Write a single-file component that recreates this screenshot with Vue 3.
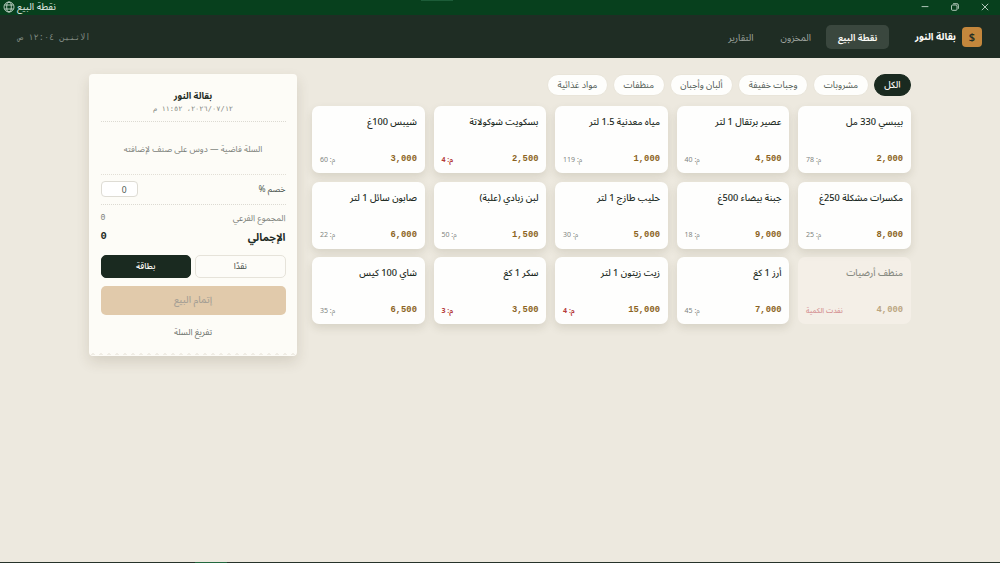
<template>
  <div class="app">
    <div class="titlebar">
      <svg class="globe" viewBox="0 0 12 12">
        <circle cx="6" cy="6" r="5" />
        <ellipse cx="6" cy="6" rx="2.3" ry="5" />
        <path d="M1.7 4h8.6M1.7 8h8.6" />
      </svg>
      <span class="window-title" dir="rtl">نقطة البيع</span>
      <div class="window-controls">
        <svg viewBox="0 0 10 10"><path d="M1.6 4.6h6.8" /></svg>
        <svg viewBox="0 0 10 10">
          <rect x="1.5" y="3" width="5.5" height="5.3" rx="1" />
          <path d="M3.1 1.7h3.8a1.5 1.5 0 0 1 1.5 1.5v3.6" />
        </svg>
        <svg viewBox="0 0 10 10"><path d="M1.8 1.8l6.4 6.4M8.2 1.8L1.8 8.2" /></svg>
      </div>
    </div>

    <header class="header" dir="rtl">
      <div class="brand">
        <span class="logo">$</span>
        <span class="brand-name">{{ shop }}</span>
      </div>
      <nav class="nav">
        <a
          v-for="tab in tabs"
          :key="tab"
          class="nav-item"
          :class="{ active: tab === activeTab }"
          @click="activeTab = tab"
        >{{ tab }}</a>
      </nav>
      <span class="clock">الاثنين ١٢:٠٤ ص</span>
    </header>

    <main class="main" dir="rtl">
      <section class="catalog">
        <div class="chips">
          <button
            v-for="cat in categories"
            :key="cat"
            class="chip"
            :class="{ active: cat === activeCategory }"
            @click="activeCategory = cat"
          >{{ cat }}</button>
        </div>
        <div class="grid">
          <div
            v-for="product in products"
            :key="product.name"
            class="product"
            :class="{ disabled: product.stock === 0 }"
          >
            <div class="product-name">{{ product.name }}</div>
            <div class="product-footer">
              <span class="price">{{ product.price.toLocaleString('en-US') }}</span>
              <span v-if="product.stock === 0" class="stock out">نفدت الكمية</span>
              <span v-else class="stock" :class="{ low: product.stock < 5 }">م: {{ product.stock }}</span>
            </div>
          </div>
        </div>
      </section>

      <aside class="receipt">
        <div class="receipt-head">
          <div class="receipt-title">{{ shop }}</div>
          <div class="receipt-date">١٢‏/٠٧‏/٢٠٢٦، ١١:٥٢ م</div>
        </div>
        <div class="empty">السلة فاضية — دوس على صنف لإضافته</div>
        <div class="discount">
          <label>خصم %</label>
          <input v-model="discount" class="discount-input" type="text" />
        </div>
        <div class="subtotal">
          <span>المجموع الفرعي</span>
          <span class="num">0</span>
        </div>
        <div class="total">
          <span>الإجمالي</span>
          <span class="num">0</span>
        </div>
        <div class="payment">
          <button
            v-for="method in methods"
            :key="method"
            class="method"
            :class="{ active: method === activeMethod }"
            @click="activeMethod = method"
          >{{ method }}</button>
        </div>
        <button class="checkout" disabled>إتمام البيع</button>
        <button class="clear">تفريغ السلة</button>
        <div class="teeth"></div>
      </aside>
    </main>
    <div class="taskbar"><span></span></div>
  </div>
</template>

<script setup>
import { ref } from 'vue'

const shop = 'بقالة النور'

const tabs = ['نقطة البيع', 'المخزون', 'التقارير']
const activeTab = ref('نقطة البيع')

const categories = ['الكل', 'مشروبات', 'وجبات خفيفة', 'ألبان وأجبان', 'منظفات', 'مواد غذائية']
const activeCategory = ref('الكل')

const methods = ['نقدًا', 'بطاقة']
const activeMethod = ref('بطاقة')
const discount = ref('0')

const products = [
  { name: 'بيبسي 330 مل', price: 2000, stock: 78 },
  { name: 'عصير برتقال 1 لتر', price: 4500, stock: 40 },
  { name: 'مياه معدنية 1.5 لتر', price: 1000, stock: 119 },
  { name: 'بسكويت شوكولاتة', price: 2500, stock: 4 },
  { name: 'شيبس 100غ', price: 3000, stock: 60 },
  { name: 'مكسرات مشكلة 250غ', price: 8000, stock: 25 },
  { name: 'جبنة بيضاء 500غ', price: 9000, stock: 18 },
  { name: 'حليب طازج 1 لتر', price: 5000, stock: 30 },
  { name: 'لبن زبادي (علبة)', price: 1500, stock: 50 },
  { name: 'صابون سائل 1 لتر', price: 6000, stock: 22 },
  { name: 'منظف أرضيات', price: 4000, stock: 0 },
  { name: 'أرز 1 كغ', price: 7000, stock: 45 },
  { name: 'زيت زيتون 1 لتر', price: 15000, stock: 4 },
  { name: 'سكر 1 كغ', price: 3500, stock: 3 },
  { name: 'شاي 100 كيس', price: 6500, stock: 35 }
]
</script>

<style>
body {
  margin: 0;
  overflow: hidden;
  background: #ede9df;
}
</style>

<style scoped>
.app {
  height: 563px;
  display: flex;
  flex-direction: column;
  font-family: "Noto Sans", "Noto Sans Arabic", "DejaVu Sans", sans-serif;
  color: #1d2b24;
  background: #ede9df;
}

button,
input {
  font-family: inherit;
  margin: 0;
  padding: 0;
  box-sizing: border-box;
}

.titlebar {
  height: 14.5px;
  flex: none;
  display: flex;
  align-items: center;
  padding: 0 10px 0 3px;
  background: linear-gradient(to right, #1c5c38, #1c5c38) 421px 0 / 32px 1px no-repeat, #07401d;
  color: #e4ede6;
}

.titlebar svg {
  fill: none;
  stroke: #dce8df;
  stroke-width: 0.8;
}

.globe {
  width: 12px;
  height: 12px;
}

.window-title {
  margin-left: 2px;
  font-size: 9.8px;
  line-height: 14px;
}

.window-controls {
  display: flex;
  gap: 20px;
  margin-left: auto;
}

.window-controls svg {
  width: 10px;
  height: 10px;
}

.header {
  height: 43.5px;
  flex: none;
  box-sizing: border-box;
  display: flex;
  align-items: center;
  padding: 1px 18px 0;
  background: #1f2d24;
}

.brand {
  display: flex;
  align-items: center;
  gap: 6px;
}

.logo {
  width: 20px;
  height: 20px;
  border-radius: 4px;
  background: #c4873c;
  color: #1f2d24;
  font-size: 11px;
  font-weight: 600;
  line-height: 20px;
  text-align: center;
}

.brand-name {
  color: #fdfcf8;
  font-size: 9.9px;
  font-weight: 700;
}

.nav {
  display: flex;
  gap: 3px;
  margin-right: 25.5px;
}

.nav-item {
  height: 24px;
  padding: 0 12px;
  border-radius: 5px;
  color: #a1a8a2;
  font-size: 9.4px;
  line-height: 25px;
}

.nav-item.active {
  background: #3a473e;
  color: #fdfcf8;
  font-weight: 600;
}

.clock {
  margin-right: auto;
  color: #7d877f;
  font-family: "DejaVu Sans Mono", monospace;
  font-size: 8.6px;
}

.main {
  width: 822px;
  margin: 0 auto;
  padding-top: 16px;
  display: flex;
  align-items: flex-start;
  gap: 15px;
}

.catalog {
  flex: 1;
}

.chips {
  display: flex;
  gap: 5px;
}

.chip {
  height: 21.5px;
  padding: 0 9.6px;
  border: 1px solid #e9e5da;
  border-radius: 11px;
  background: #fefefc;
  color: #4f5953;
  font-size: 9.1px;
}

.chip.active {
  border-color: #1a2a20;
  background: #1a2a20;
  color: #fdfcf8;
  font-weight: 500;
}

.grid {
  display: grid;
  grid-template-columns: repeat(5, 1fr);
  grid-auto-rows: 67px;
  gap: 8.6px;
  margin-top: 10.8px;
}

.product {
  box-sizing: border-box;
  padding: 8px 8px 7.5px;
  display: flex;
  flex-direction: column;
  justify-content: space-between;
  border-radius: 7px;
  background: #fefefd;
  box-shadow: 0 4px 8px rgba(70, 60, 30, 0.13);
}

.product.disabled {
  background: #fbf5ef;
  opacity: 0.5;
  box-shadow: none;
}

.product-name {
  font-size: 9.2px;
  font-weight: 500;
  line-height: 16px;
  white-space: nowrap;
}

.product-footer {
  display: flex;
  justify-content: space-between;
  align-items: center;
  height: 13px;
}

.price {
  color: #8b6322;
  font-family: "Liberation Mono", monospace;
  font-size: 8.8px;
  font-weight: 700;
}

.stock {
  color: #7f857f;
  font-size: 7px;
}

.stock.low {
  color: #b53a3a;
  font-weight: 700;
}

.stock.out {
  color: #c0404c;
  font-size: 7.2px;
  font-weight: 500;
}

.receipt {
  width: 208px;
  height: 281.5px;
  box-sizing: border-box;
  padding: 13.5px 11.5px 0;
  display: flex;
  flex-direction: column;
  border-radius: 4px;
  background: #fdfcf7;
  box-shadow: 0 6px 14px rgba(70, 60, 30, 0.14);
}

.receipt-head {
  height: 33.5px;
  border-bottom: 1px dotted #dcdad2;
  text-align: center;
}

.receipt-title {
  font-size: 9.2px;
  font-weight: 700;
  line-height: 15px;
}

.receipt-date {
  color: #7f857f;
  font-family: "DejaVu Sans Mono", monospace;
  font-size: 7px;
  line-height: 13px;
}

.empty {
  height: 52px;
  border-bottom: 1px dotted #e2dfd6;
  color: #7b807a;
  font-size: 8.5px;
  line-height: 53px;
  text-align: center;
  white-space: nowrap;
}

.discount {
  height: 28.5px;
  display: flex;
  justify-content: space-between;
  align-items: center;
  border-bottom: 1px dotted #dcdad2;
  color: #4d5750;
  font-size: 8.5px;
}

.discount-input {
  width: 37px;
  height: 16px;
  padding: 0 10px;
  border: 1px solid #dedcd4;
  border-radius: 4px;
  background: #fff;
  color: #4d5750;
  font-size: 8.5px;
}

.subtotal,
.total {
  display: flex;
  justify-content: space-between;
}

.subtotal {
  margin-top: 6px;
  color: #7b807a;
  font-size: 8.6px;
  line-height: 15px;
}

.total {
  font-size: 10.6px;
  font-weight: 700;
  line-height: 22px;
}

.num {
  font-family: "Liberation Mono", monospace;
}

.subtotal .num {
  font-size: 8.2px;
  line-height: 13px;
}

.total .num {
  font-size: 10.5px;
  line-height: 20px;
}

.payment {
  display: flex;
  gap: 4px;
  margin-top: 7px;
}

.method {
  flex: 1;
  height: 23px;
  border: 1px solid #e6e3da;
  border-radius: 5px;
  background: #fdfcf8;
  color: #39453d;
  font-size: 8.5px;
}

.method.active {
  border-color: #1a2a20;
  background: #1a2a20;
  color: #fdfcf8;
  font-weight: 500;
}

.checkout {
  height: 29px;
  flex: none;
  margin-top: 8px;
  border: 0;
  border-radius: 5px;
  background: #e1caab;
  color: #a6a095;
  font-size: 9.5px;
  font-weight: 500;
}

.clear {
  height: 20px;
  margin-top: 7px;
  border: 0;
  background: none;
  color: #6d736d;
  font-size: 8.7px;
}

/* torn paper edge */
.teeth {
  height: 3px;
  margin: auto -11.5px 1px;
  background: conic-gradient(from 135deg at 50% 0, #f0ede5 90deg, transparent 0) 0 0 / 8px 3px repeat-x;
}

.taskbar {
  height: 1px;
  margin-top: auto;
  background: #26332a;
}

.taskbar span {
  display: block;
  width: 32px;
  height: 1px;
  margin-left: 195px;
  background: #22683f;
}
</style>
